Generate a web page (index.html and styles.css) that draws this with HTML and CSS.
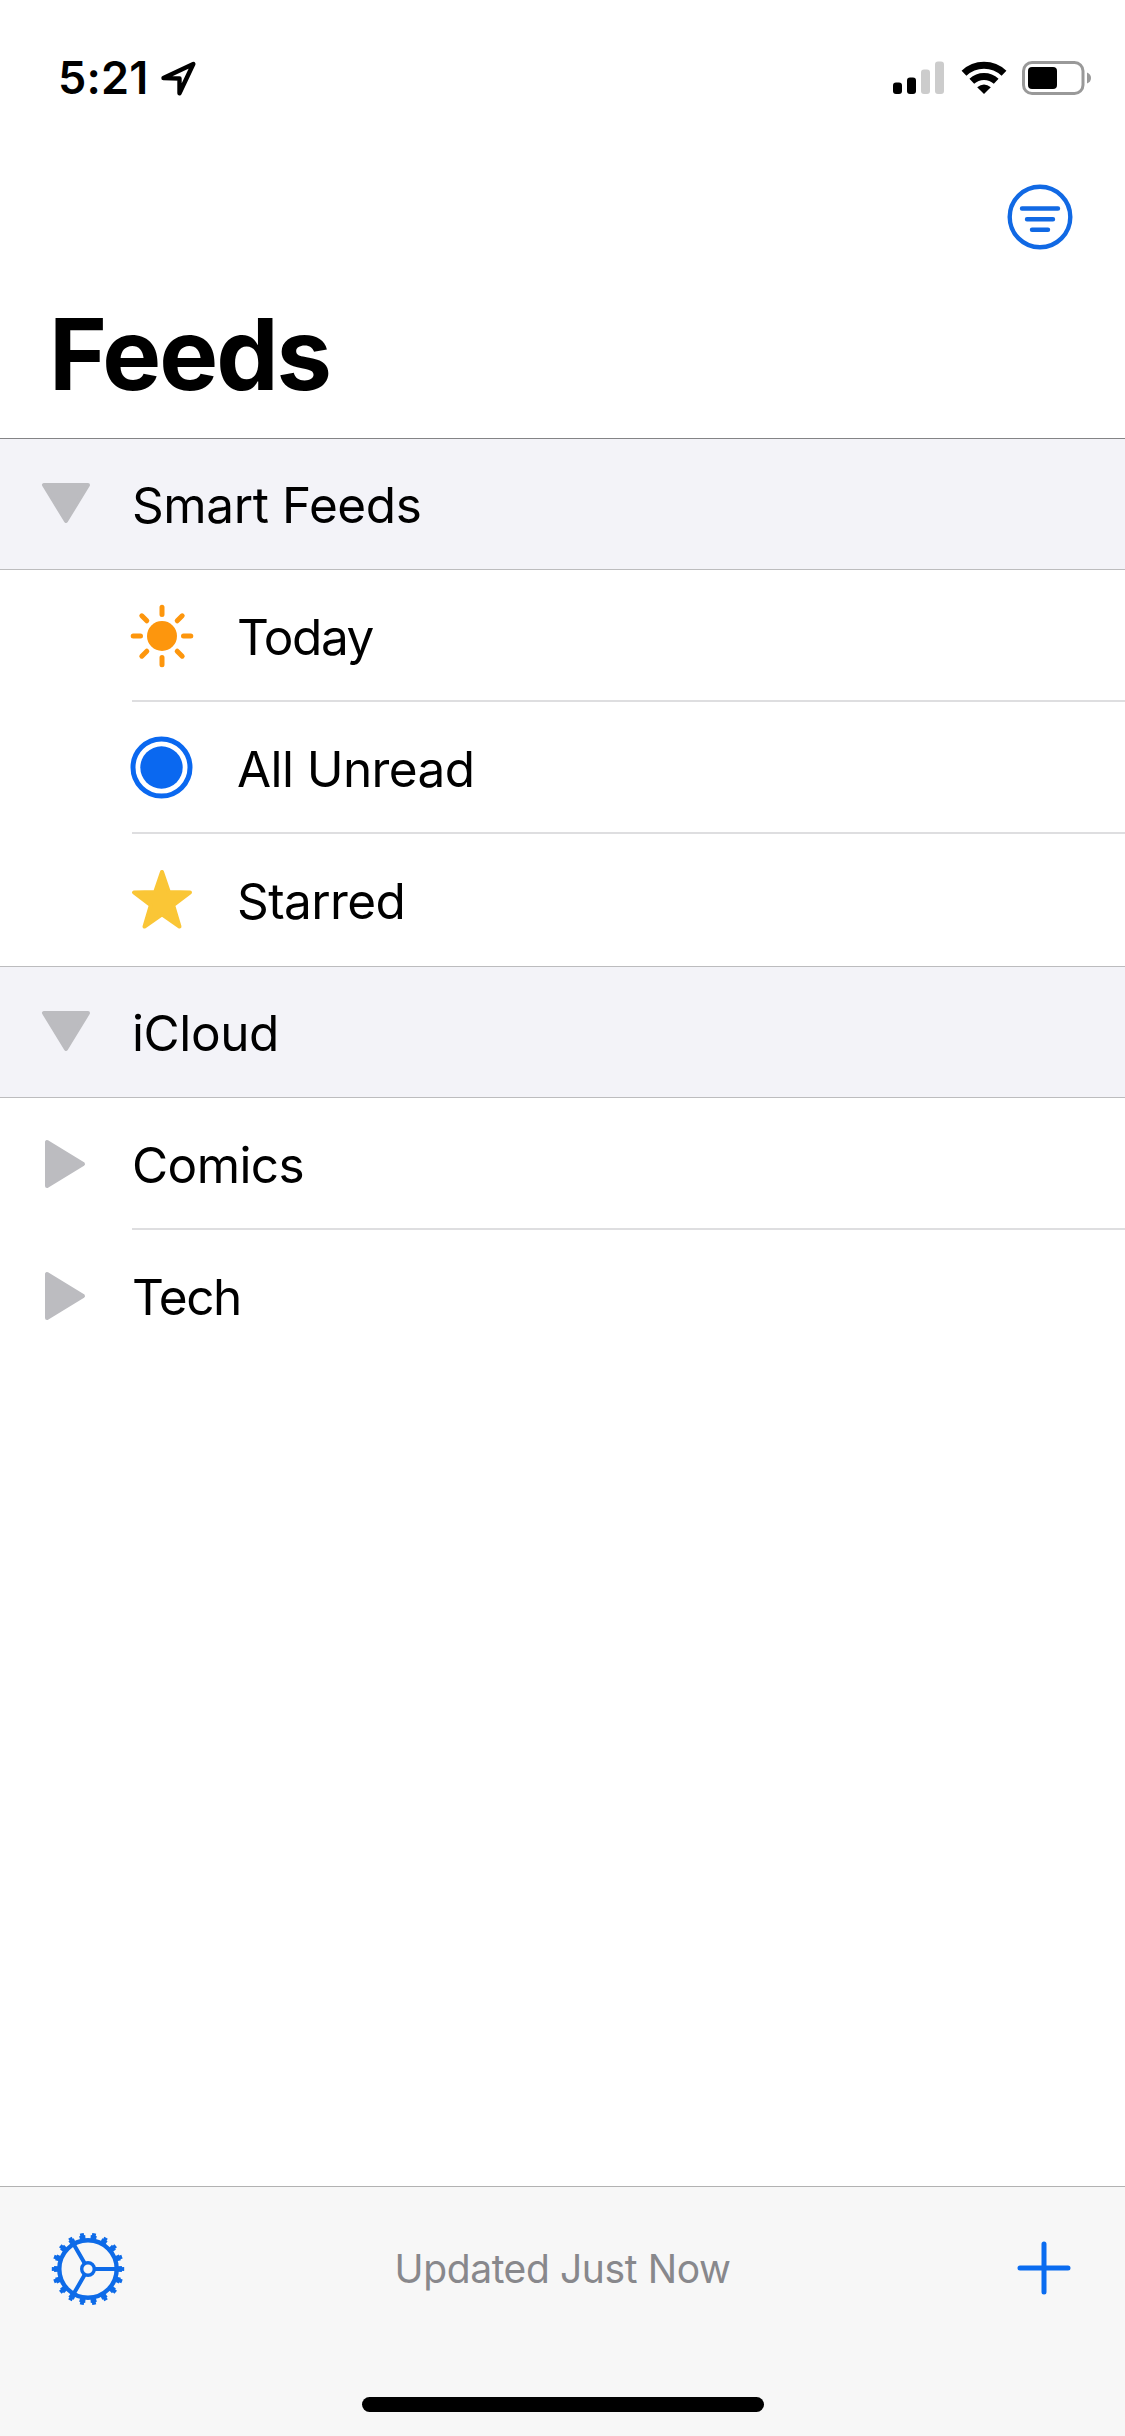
FILE: index.html
```
<!DOCTYPE html>
<html lang="en">
  <head>
    <meta charset="UTF-8" />
    <title>Feeds</title>
    <link rel="stylesheet" href="styles.css">
  </head>
  <body>
    <div class="screen">
      <!-- status bar -->
      <div class="status">
        <div class="status-left">
          <span class="time">5:21</span>
          <svg class="location" width="38" height="38" viewBox="0 0 38 38">
            <path d="M3.500 18 33.300 4 19.500 33.300 V18.500 Z" />
          </svg>
        </div>
        <div class="status-right">
          <svg class="signal" width="51" height="33" viewBox="0 0 51 33">
            <rect x="0" y="21.500" width="9" height="11.500" rx="3" />
            <rect x="14" y="16.500" width="9" height="16.500" rx="3" />
            <rect class="off" x="28" y="8.500" width="9" height="24.500" rx="3" />
            <rect class="off" x="42" y="0.500" width="9" height="32.500" rx="3" />
          </svg>
          <svg class="wifi" width="46" height="34" viewBox="0 0 46 34">
            <path class="arc" d="M3 12.300 A29 29 0 0 1 43 12.300" />
            <path class="arc" d="M10.800 20.200 A18 18 0 0 1 35.200 20.200" />
            <path d="M23 33 L16.200 26.300 Q23 20.800 29.800 26.300 Z" />
          </svg>
          <svg class="battery" width="70" height="34" viewBox="0 0 70 34">
            <rect class="case" x="1.500" y="1.500" width="59.500" height="31" rx="8.500" />
            <rect x="6" y="6" width="29" height="22" rx="4" />
            <path class="cap" d="M65 11.500 Q69 13 69 17 Q69 21 65 22.500 Z" />
          </svg>
        </div>
      </div>

      <!-- nav bar -->
      <div class="nav">
        <svg class="filter" width="66" height="66" viewBox="0 0 66 66">
          <circle cx="33" cy="33" r="30.300" />
          <path d="M15 24.500 H51 M20 35.200 H46 M25 45.700 H41" />
        </svg>
      </div>
      <h1 class="title">Feeds</h1>

      <!-- feed list -->
      <div class="list">
        <div class="row header first">
          <div class="disclosure">
            <svg width="50" height="42" viewBox="0 0 50 42"><path d="M3 3 H47 L25 39 Z" /></svg>
          </div>
          <div class="label">Smart Feeds</div>
        </div>
        <div class="row feed">
          <div class="content line">
            <svg class="icon sun" width="64" height="64" viewBox="0 0 64 64">
              <circle cx="32" cy="32" r="15" />
              <path d="M32 3.200 V10.500 M32 53.500 V60.800 M3.200 32 H10.500 M53.500 32 H60.800 M11.800 11.800 L16.800 16.800 M47.200 47.200 L52.200 52.200 M52.200 11.800 L47.200 16.800 M16.800 47.200 L11.800 52.200" />
            </svg>
            <div class="label tight">Today</div>
          </div>
        </div>
        <div class="row feed">
          <div class="content line">
            <svg class="icon unread" width="64" height="64" viewBox="0 0 64 64">
              <circle class="ring" cx="31.500" cy="31.500" r="28.500" />
              <circle cx="31.500" cy="31.500" r="21.200" />
            </svg>
            <div class="label">All Unread</div>
          </div>
        </div>
        <div class="row feed">
          <div class="content">
            <svg class="icon star" width="64" height="64" viewBox="0 0 64 64">
              <path d="M32 4 L38.800 24 L60 24.400 L43.200 37.200 L49.500 58.500 L32 46.400 L14.500 58.500 L20.800 37.200 L4 24.400 L25.200 24 Z" />
            </svg>
            <div class="label">Starred</div>
          </div>
        </div>
        <div class="row header">
          <div class="disclosure">
            <svg width="50" height="42" viewBox="0 0 50 42"><path d="M3 3 H47 L25 39 Z" /></svg>
          </div>
          <div class="label">iCloud</div>
        </div>
        <div class="row folder">
          <div class="disclosure closed">
            <svg width="42" height="50" viewBox="0 0 42 50"><path d="M3 3 V47 L39 25 Z" /></svg>
          </div>
          <div class="content line"><div class="label">Comics</div></div>
        </div>
        <div class="row folder">
          <div class="disclosure closed">
            <svg width="42" height="50" viewBox="0 0 42 50"><path d="M3 3 V47 L39 25 Z" /></svg>
          </div>
          <div class="content"><div class="label tight">Tech</div></div>
        </div>
      </div>

      <!-- toolbar -->
      <div class="toolbar">
        <div class="actions">
          <svg class="gear" width="74" height="74" viewBox="0 0 74 74">
            <circle class="rim" cx="37" cy="37" r="28.700" />
            <circle class="teeth-base" cx="37" cy="37" r="32" pathLength="180" />
            <circle class="teeth-tip" cx="37" cy="37" r="34.200" pathLength="180" />
            <circle class="hub" cx="37" cy="37" r="6.300" />
            <path d="M44 37 H66 M33.500 30.900 L22.500 11.900 M33.500 43.100 L22.500 62.100" />
          </svg>
          <div class="updated">Updated Just Now</div>
          <svg class="plus" width="54" height="54" viewBox="0 0 54 54">
            <path d="M27 3 V51 M3 27 H51" />
          </svg>
        </div>
        <div class="home-bar"></div>
      </div>
    </div>
  </body>
</html>
```

FILE: styles.css
```
* {
  box-sizing: border-box;
}

body {
  margin: 0;
  background: #fff;
  color: #000;
  font-family: Inter, "Liberation Sans", sans-serif;
}

svg {
  display: block;
  flex: none;
}

.screen {
  display: flex;
  flex-direction: column;
  width: 1125px;
  height: 2436px;
}

/* status bar */
.status {
  display: flex;
  justify-content: space-between;
  height: 132px;
  padding: 60px 33px 0 58px;
}

.status-left,
.status-right {
  display: flex;
  align-items: flex-start;
}

.time {
  width: 102px;
  font-size: 45px;
  font-weight: 600;
  line-height: 36px;
  letter-spacing: 0.2px;
}

.location {
  fill: none;
  stroke: #000;
  stroke-width: 4.4;
  stroke-linejoin: round;
}

.signal {
  margin: 1px 17px 0 0;
}

.signal .off {
  fill: #ccc;
}

.wifi {
  margin: 1px 15px 0 0;
}

.wifi .arc {
  fill: none;
  stroke: #000;
  stroke-width: 7;
}

.battery {
  margin-top: 1px;
}

.battery .case {
  fill: none;
  stroke: #999;
  stroke-width: 3;
}

.battery .cap {
  fill: #999;
}

/* nav bar */
.nav {
  display: flex;
  justify-content: flex-end;
  height: 156px;
  padding: 52px 52px 0 0;
}

.filter {
  fill: none;
  stroke: #1169e4;
  stroke-width: 4.4;
  stroke-linecap: round;
}

.title {
  height: 150px;
  margin: 0;
  padding: 6px 0 0 49px;
  font-size: 99px;
  font-weight: 700;
  line-height: 120px;
  letter-spacing: -2px;
}

/* list */
.list {
  flex: 1;
}

.row {
  display: flex;
  height: 132px;
}

.row.header {
  align-items: center;
  background: #f3f3f8;
  border-top: 1px solid #bcbcbe;
  border-bottom: 1px solid #bcbcbe;
}

.row.header.first {
  border-top-color: #848486;
}

.row.feed {
  padding-left: 132px;
}

.disclosure {
  display: flex;
  align-items: center;
  width: 132px;
  padding: 0 0 2px 41px;
}

.disclosure.closed {
  padding: 0 0 0 44px;
}

.disclosure path {
  fill: #bcbcc0;
  stroke: #bcbcc0;
  stroke-width: 4;
  stroke-linejoin: round;
}

.content {
  display: flex;
  flex: 1;
  align-items: center;
  border-bottom: 2px solid transparent;
}

.content.line {
  border-color: #dedee0;
}

.label {
  padding-top: 2px;
  font-size: 49.5px;
  line-height: 60px;
  letter-spacing: -0.4px;
}

.content .label {
  padding-top: 4px;
  letter-spacing: -0.6px;
}

.content .label.tight {
  letter-spacing: -1.4px;
}

.icon {
  margin: 1px 43px 0 -2px;
}

.sun {
  fill: #fd960d;
}

.sun path {
  stroke: #fd960d;
  stroke-width: 5;
  stroke-linecap: round;
}

.unread {
  fill: #0a68f0;
}

.unread .ring {
  fill: none;
  stroke: #0a68f0;
  stroke-width: 5;
}

.star {
  fill: #fac636;
  stroke: #fac636;
  stroke-width: 4;
  stroke-linejoin: round;
}

/* toolbar */
.toolbar {
  height: 250px;
  border-top: 1px solid #b2b2b2;
  background: #f7f7f7;
}

.actions {
  display: grid;
  grid-template-columns: 74px 1fr 74px;
  align-items: center;
  height: 163px;
  padding: 0 51px;
}

.gear {
  fill: none;
  stroke: #0e6be8;
  stroke-width: 4;
}

.gear .rim {
  stroke-width: 4.4;
}

.gear .teeth-base {
  stroke-dasharray: 5.2 4.8;
  stroke-dashoffset: 2.6;
}

.gear .teeth-tip {
  stroke-dasharray: 3.2 6.8;
  stroke-dashoffset: 1.6;
}

.gear .hub {
  stroke-width: 3.4;
}

.updated {
  color: #88888c;
  font-size: 39px;
  line-height: 48px;
  letter-spacing: -0.4px;
  text-align: center;
}

.plus {
  justify-self: end;
  margin: 0 3px 1px 0;
  stroke: #0a6cf0;
  stroke-width: 5;
  stroke-linecap: round;
}

.home-bar {
  width: 402px;
  height: 15px;
  margin: 47px auto 0;
  border-radius: 8px;
  background: #000;
}
```
